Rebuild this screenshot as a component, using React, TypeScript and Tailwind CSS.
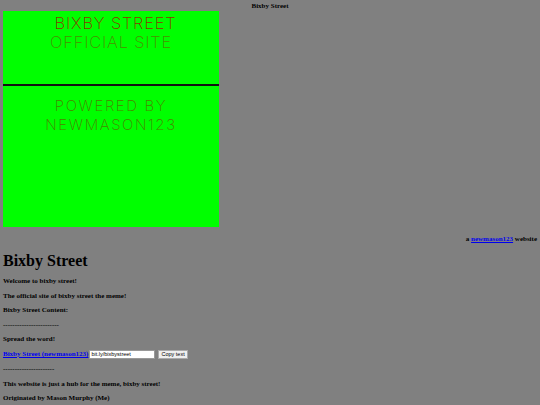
export default function App() {
  return (
    <div className="min-h-screen bg-[#808080] text-black font-['Liberation_Serif',serif] px-[3px] pt-[2px] overflow-hidden">
      <div className="text-center text-[7px] leading-[8px] font-bold">Bixby Street</div>

      {/* logo banner */}
      <div className="mt-[1px] w-[216px] h-[216px] bg-[#00ff00] flex flex-col font-['Inter',sans-serif] font-extralight">
        <div className="h-[73px] flex flex-col items-center pt-[3px]">
          <div className="ml-[9px] text-[16.5px] leading-[19px] text-[#8a3400] tracking-[0.8px]">BIXBY STREET</div>
          <div className="text-[16.5px] leading-[19px] text-[#4a9000] tracking-[0.8px]">OFFICIAL SITE</div>
        </div>
        <div className="h-[2px] bg-[#111]" />
        <div className="flex flex-col items-center pt-[11px]">
          <div className="text-[15px] leading-[18.5px] text-[#4a8400] tracking-[1.6px]">POWERED BY</div>
          <div className="text-[15px] leading-[18.5px] text-[#4a8400] tracking-[1.6px]">NEWMASON123</div>
        </div>
      </div>

      <div className="text-right text-[7px] leading-[8px] font-bold mt-[8px]">
        a <a href="#" className="text-[#0000ee] underline">newmason123</a> website
      </div>

      <h1 className="text-[16px] leading-[18px] font-bold mt-[9px] mb-[7px]">Bixby Street</h1>
      <div className="text-[7px] leading-[8px] font-bold flex flex-col gap-[6.5px]">
        <p>Welcome to bixby street!</p>
        <p>The official site of bixby street the meme!</p>
        <p>Bixby Street Content:</p>
        <p>------------------------</p>
        <p>Spread the word!</p>
        <p className="flex items-center gap-[1px]">
          <a href="#" className="text-[#0000ee] underline">Bixby Street (newmason123)</a>
          <input
            readOnly
            value="bit.ly/bixbystreet"
            className="w-[66px] h-[9px] bg-white border border-[#999] text-[5.5px] px-[1px] font-['Liberation_Sans',sans-serif] font-normal outline-none"
          />
          <button className="ml-[2px] h-[9px] px-[2px] bg-[#efefef] border border-[#aaa] text-[5.5px] leading-[7px] font-['Liberation_Sans',sans-serif] font-normal">
            Copy text
          </button>
        </p>
        <p>----------------------</p>
        <p>This website is just a hub for the meme, bixby street!</p>
        <p>Originated by Mason Murphy (Me)</p>
      </div>
    </div>
  );
}
